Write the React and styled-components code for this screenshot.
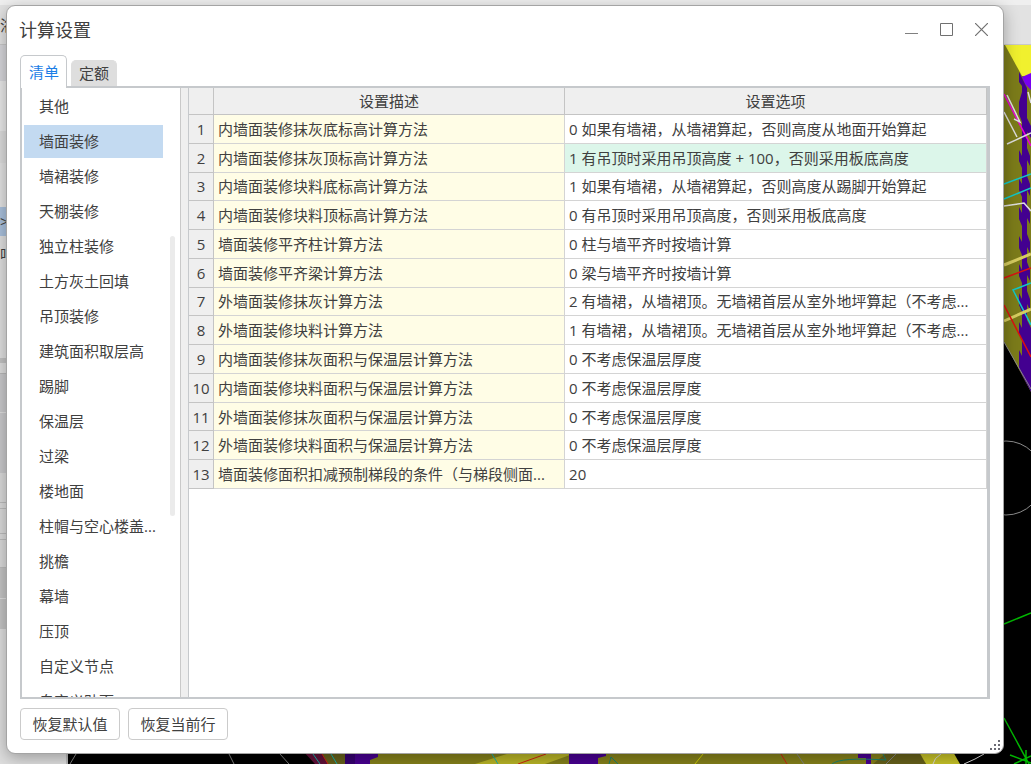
import { useState } from "react";
import styled, { createGlobalStyle } from "styled-components";

const GlobalStyle = createGlobalStyle`
  *, *::before, *::after {
    box-sizing: border-box;
  }
  body {
    margin: 0;
    font: 15px/20px "Open Sans", "Noto Sans CJK SC", sans-serif;
    color: #404040;
  }
  button {
    font: inherit;
    color: inherit;
    cursor: pointer;
  }
`;

const Desktop = styled.div`
  position: relative;
  display: flex;
  height: 100vh;
  padding: 5px 27px 10px 6px;
  overflow: hidden;
`;

const HostWindow = styled.div`
  position: absolute;
  inset: 0;
  display: grid;
  grid-template: 45px minmax(0, 1fr) / 68px minmax(0, 1fr);
  background-color: #e4e4e4;
`;

const HostToolbar = styled.div`
  grid-column: 1 / -1;
  padding-top: 10px;
  border-top: 5px solid #efefef;
  border-bottom: 1px solid #c8c8c8;
  background-color: #e2e2e2;
  white-space: nowrap;
`;

const HostPanel = styled.div`
  display: flex;
  flex-direction: column;
  border-right: 2px solid #bcbcbc;
  overflow: hidden;
`;

const HostBlock = styled.div`
  flex: ${(props) => (props.$height ? `0 0 ${props.$height}px` : "1")};
  background-color: ${(props) => props.$color};
  border-bottom: 1px solid ${(props) => props.$line || props.$color};
  line-height: 28px;
`;

const Scene = styled.svg`
  display: block;
  width: 100%;
  height: 100%;
  background-color: black;
`;

const Dialog = styled.section`
  position: relative;
  flex: 1;
  min-width: 0;
  display: flex;
  flex-direction: column;
  border: 1px solid #a4a4a4;
  border-radius: 9px;
  background-color: white;
  box-shadow: 0 4px 16px rgba(0, 0, 0, 0.3);
`;

const TitleBar = styled.header`
  display: flex;
  align-items: center;
  justify-content: space-between;
  height: 49px;
  padding: 0 4px 2px 12px;
`;

const Title = styled.h1`
  margin: 0;
  font-size: 18px;
  font-weight: 400;
  line-height: 24px;
`;

const WindowButtons = styled.div`
  display: flex;
`;

const WindowButton = styled.button`
  display: flex;
  justify-content: center;
  width: 35px;
  padding: 8px 0;
  border: none;
  background-color: transparent;
`;

const TabList = styled.div`
  display: flex;
  align-items: flex-end;
  gap: 4px;
  height: 33px;
  margin: 0 13px -2px;
  z-index: 1;
`;

const Tab = styled.button`
  height: ${(props) => (props.$active ? 33 : 26)}px;
  margin-bottom: ${(props) => (props.$active ? 0 : 2)}px;
  padding: ${(props) => (props.$active ? "0 7px 0 8px" : "0 7px 2px")};
  border: 1px solid ${(props) => (props.$active ? "#c6c9cc" : "#dedede")};
  border-bottom: none;
  border-radius: 5px 5px 0 0;
  background-color: ${(props) => (props.$active ? "white" : "#dedede")};
  color: ${(props) => (props.$active ? "#1c7ee6" : "#404040")};
`;

const Frame = styled.div`
  flex: 1;
  min-height: 0;
  display: flex;
  margin: 0 13px;
  border: 2px solid #c6c9cc;
  border-right-width: 3px;
  background-color: white;
`;

const Sidebar = styled.nav`
  position: relative;
  flex: 0 0 159px;
  display: flex;
  flex-direction: column;
  gap: 2px;
  padding: 2px 17px 0 2px;
  border-right: 1px solid #c9c9c9;
  overflow: hidden;
`;

const SidebarItem = styled.button`
  flex: 0 0 33px;
  padding: 0 0 2px 15px;
  border: none;
  background-color: ${(props) => (props.$active ? "#c3daf1" : "transparent")};
  text-align: left;
  white-space: nowrap;
`;

const ScrollThumb = styled.div`
  position: absolute;
  top: 148px;
  right: 5px;
  width: 5px;
  height: 46%;
  border-radius: 3px;
  background-color: #ebebeb;
`;

const Splitter = styled.div`
  flex: 0 0 8px;
  background-color: #efefef;
  border-right: 1px solid #c6c9cc;
`;

const TablePane = styled.div`
  flex: 1;
  min-width: 0;
  overflow: hidden;
`;

const Table = styled.table`
  width: 100%;
  height: 401px;
  border-collapse: separate;
  border-spacing: 0;
  table-layout: fixed;
`;

const HeadCell = styled.th`
  width: ${(props) => props.$width || "auto"};
  height: 27px;
  padding: 0;
  border-right: 1px solid #c4c4c4;
  border-bottom: 1px solid #c4c4c4;
  background-color: #efefef;
  font-weight: 400;
`;

const RowNumber = styled.th`
  padding: 0;
  border-right: 1px solid #c4c4c4;
  border-bottom: 1px solid #c4c4c4;
  background-color: #efefef;
  font-weight: 400;
`;

const Cell = styled.td`
  padding: 0 4px;
  border-right: 1px solid #d4d4d4;
  border-bottom: 1px solid #d4d4d4;
  background-color: ${(props) => props.$color || "white"};
  overflow: hidden;
  white-space: nowrap;
`;

const Footer = styled.footer`
  display: flex;
  gap: 8px;
  padding: 9px 13px 13px;
`;

const FooterButton = styled.button`
  width: 100px;
  height: 32px;
  padding: 0;
  border: 1px solid #cbcbcb;
  border-radius: 4px;
  background-color: white;
`;

const ResizeGrip = styled.svg`
  position: absolute;
  right: 3px;
  bottom: 3px;
  fill: #6a6a74;
`;

const categories = [
  "其他",
  "墙面装修",
  "墙裙装修",
  "天棚装修",
  "独立柱装修",
  "土方灰土回填",
  "吊顶装修",
  "建筑面积取层高",
  "踢脚",
  "保温层",
  "过梁",
  "楼地面",
  "柱帽与空心楼盖...",
  "挑檐",
  "幕墙",
  "压顶",
  "自定义节点",
  "自定义贴面",
];

const settings = [
  ["内墙面装修抹灰底标高计算方法", "0 如果有墙裙，从墙裙算起，否则高度从地面开始算起"],
  ["内墙面装修抹灰顶标高计算方法", "1 有吊顶时采用吊顶高度 + 100，否则采用板底高度"],
  ["内墙面装修块料底标高计算方法", "1 如果有墙裙，从墙裙算起，否则高度从踢脚开始算起"],
  ["内墙面装修块料顶标高计算方法", "0 有吊顶时采用吊顶高度，否则采用板底高度"],
  ["墙面装修平齐柱计算方法", "0 柱与墙平齐时按墙计算"],
  ["墙面装修平齐梁计算方法", "0 梁与墙平齐时按墙计算"],
  ["外墙面装修抹灰计算方法", "2 有墙裙，从墙裙顶。无墙裙首层从室外地坪算起（不考虑..."],
  ["外墙面装修块料计算方法", "1 有墙裙，从墙裙顶。无墙裙首层从室外地坪算起（不考虑..."],
  ["内墙面装修抹灰面积与保温层计算方法", "0 不考虑保温层厚度"],
  ["内墙面装修块料面积与保温层计算方法", "0 不考虑保温层厚度"],
  ["外墙面装修抹灰面积与保温层计算方法", "0 不考虑保温层厚度"],
  ["外墙面装修块料面积与保温层计算方法", "0 不考虑保温层厚度"],
  ["墙面装修面积扣减预制梯段的条件（与梯段侧面...", "20"],
];

const CHANGED_ROW = 1;

function ModelScene() {
  return (
    <Scene viewBox="68 45 963 719" preserveAspectRatio="none" fill="none" aria-hidden="true">
      {/* wall at the right edge */}
      <path d="M1000 45H1031V392L1000 334Z" fill="#7c7c1a" />
      <path d="M1005 45H1031V76H1022Z" fill="#f0f02e" />
      <path d="M1022 77L1031 73V90L1025 84Z" fill="#7800f0" />
      <path
        d="M1019 72L1027 88V118L1031 126V138L1027 132V148L1030 156V166L1027 160V176L1030 184V196L1027 190V205L1030 213V224L1027 218V234L1030 242V253L1027 247V262L1030 270V281L1027 275V291L1030 299V310L1027 304V320L1031 328V392L1019 369V350L1022 356V340L1019 334V322L1022 328V312L1019 305V293L1022 299V283L1019 276V264L1022 270V255L1019 248V236L1022 242V226L1019 219V207L1022 213V197L1019 190V179L1022 184V168L1019 161V150L1022 156V122L1019 114V102L1022 92V86L1019 82Z"
        fill="#430090"
      />
      <path d="M1004 94L1031 146" stroke="#e800d8" strokeWidth="1.5" />
      <path d="M1007 95L1020 122L1014 119M1004 112L1017 137M1007 144L1031 133M1028 92L1031 103M1004 206L1024 203L1031 211" stroke="#dedede" strokeWidth="1.5" />
      <path d="M1004 184L1031 174M1004 199L1031 188M1031 283L1013 290L1031 325" stroke="#10c8c8" strokeWidth="1.5" />
      <path d="M1004 265L1031 254M1004 321L1031 309" stroke="#d6cc60" strokeWidth="3" />
      <path d="M1004 278L1031 268M1004 305L1031 357" stroke="#dc1010" strokeWidth="1.5" />
      <path d="M1004 342L1031 389" stroke="#888" />
      <circle cx="1006" cy="478" r="37" stroke="#8c8c8c" />
      <path d="M1004 624L1031 613M1004 718L1029 764M1010 755L1031 763M1014 764L1031 756M1026 750V764" stroke="#00b800" strokeWidth="1.5" />

      {/* floor below the dialog */}
      <path d="M302 750H330L335 764H315Z" fill="#601038" />
      <path d="M320 750H920V764H328Z" fill="#84801a" />
      <path d="M320 750H345V764H328Z" fill="#66601a" />
      <path d="M345 750H378V757L370 760V764H345Z" fill="#480090" />
      <path d="M345 750H355V764H345Z" fill="#360070" />
      <path d="M475 764L520 750H570V755L545 764Z" fill="#b8b426" />
      <path d="M569 750H606V756L598 758V764H569Z" fill="#480090" />
      <path d="M890 750H922L926 764H873Z" fill="#66601a" />
      <path d="M918 750H952L960 764H926Z" fill="#c6c228" />
      <path d="M858 754H871V764H866V758H858Z" fill="#480090" />
      <path d="M76 754L70 764M229 754L234 764M280 754L289 764M797 754L804 764M896 754L886 764" stroke="#808080" />
      <path d="M941 754Q934 758 933 764M984 754Q976 759 964 764" stroke="#d8d8d8" />
      <path d="M313 754L320 764M331 754L337 764M492 754L498 764" stroke="#18b0a8" />
      <path d="M609 764L611 757L618 764M832 764Q840 757 886 760L883 754" stroke="#188070" />
      <path d="M322 754L328 764M518 764L546 754M781 754L787 764" stroke="#d02010" />
      <path d="M695 764L703 754" stroke="#d0d000" />
    </Scene>
  );
}

function HostApp() {
  return (
    <HostWindow aria-hidden="true">
      <HostToolbar>浴</HostToolbar>
      <HostPanel>
        <HostBlock $height={36} $color="#d6d6da" />
        <HostBlock $height={50} $color="#e8e8e8" />
        <HostBlock $height={32} $color="#dcdcdc" />
        <HostBlock $height={44} $color="#e2e2e2" />
        <HostBlock $height={26} $color="#a9c0dc">&gt;</HostBlock>
        <HostBlock $height={4} $color="#dfdfdf" />
        <HostBlock $height={118} $color="#dfdfdf">吧</HostBlock>
        <HostBlock $height={5} $color="#c2c2c2" />
        <HostBlock $height={11} $color="#dedede" $line="#b8b8b8" />
        <HostBlock $height={39} $color="#c9c9cb" $line="#dedede" />
        <HostBlock $height={60} $color="#c9c9cb" />
        <HostBlock $height={30} $color="#dadada" $line="#bcbcbc" />
        <HostBlock $height={6} $color="#dadada" $line="#bcbcbc" />
        <HostBlock $height={25} $color="#dadada" $line="#bcbcbc" />
        <HostBlock $height={6} $color="#dadada" $line="#bcbcbc" />
        <HostBlock $height={28} $color="#dadada" $line="#bcbcbc" />
        <HostBlock $height={31} $color="#c4c4c4" $line="#dedede" />
        <HostBlock $height={30} $color="#c4c4c4" />
        <HostBlock $color="#dedede" />
      </HostPanel>
      <ModelScene />
    </HostWindow>
  );
}

function SettingsTable() {
  return (
    <Table>
      <thead>
        <tr>
          <HeadCell $width="25px" />
          <HeadCell $width="44%">设置描述</HeadCell>
          <HeadCell>设置选项</HeadCell>
        </tr>
      </thead>
      <tbody>
        {settings.map(([description, option], index) => (
          <tr key={description}>
            <RowNumber scope="row">{index + 1}</RowNumber>
            <Cell $color="#fffde6">{description}</Cell>
            <Cell $color={index === CHANGED_ROW ? "#dcf6ea" : "white"}>{option}</Cell>
          </tr>
        ))}
      </tbody>
    </Table>
  );
}

export default function App() {
  const [tab, setTab] = useState("清单");
  const [category, setCategory] = useState("墙面装修");

  return (
    <>
      <GlobalStyle />
      <Desktop>
        <HostApp />
        <Dialog role="dialog" aria-labelledby="dialog-title">
          <TitleBar>
            <Title id="dialog-title">计算设置</Title>
            <WindowButtons>
              <WindowButton aria-label="最小化">
                <svg width="13" height="13" stroke="#808080">
                  <path d="M0 10.5H13" />
                </svg>
              </WindowButton>
              <WindowButton aria-label="最大化">
                <svg width="13" height="13" fill="none" stroke="#707070">
                  <path d="M.5 .5H12.5V12.5H.5Z" />
                </svg>
              </WindowButton>
              <WindowButton aria-label="关闭">
                <svg width="13" height="13" stroke="#707070" strokeWidth="1.2">
                  <path d="M0 0L13 13M13 0L0 13" />
                </svg>
              </WindowButton>
            </WindowButtons>
          </TitleBar>
          <TabList role="tablist">
            {["清单", "定额"].map((name) => (
              <Tab
                key={name}
                role="tab"
                aria-selected={tab === name}
                $active={tab === name}
                onClick={() => setTab(name)}
              >
                {name}
              </Tab>
            ))}
          </TabList>
          <Frame>
            <Sidebar>
              {categories.map((name) => (
                <SidebarItem
                  key={name}
                  $active={category === name}
                  onClick={() => setCategory(name)}
                >
                  {name}
                </SidebarItem>
              ))}
              <ScrollThumb />
            </Sidebar>
            <Splitter />
            <TablePane>
              <SettingsTable />
            </TablePane>
          </Frame>
          <Footer>
            <FooterButton>恢复默认值</FooterButton>
            <FooterButton>恢复当前行</FooterButton>
          </Footer>
          <ResizeGrip width="10" height="10" aria-hidden="true">
            <path d="M8 0h2v2h-2zM4 4h2v2h-2zM8 4h2v2h-2zM0 8h2v2h-2zM4 8h2v2h-2zM8 8h2v2h-2z" />
          </ResizeGrip>
        </Dialog>
      </Desktop>
    </>
  );
}
